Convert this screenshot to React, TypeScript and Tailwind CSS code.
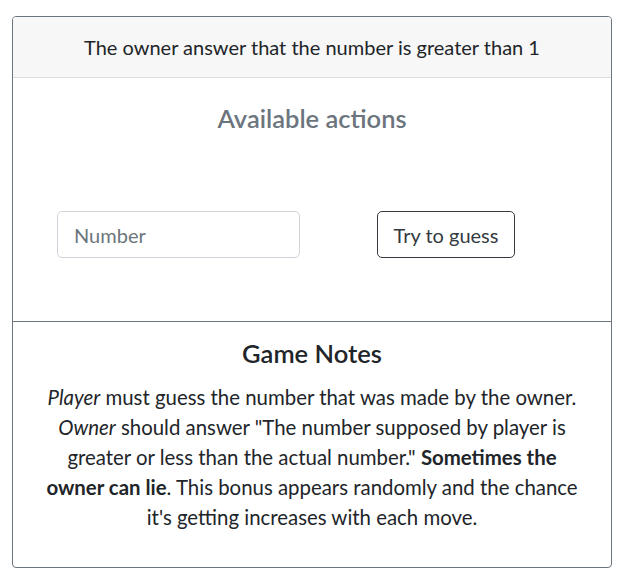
export default function App() {
  return (
    <div className="pt-4 pl-3 bg-white min-h-[586px]" style={{ fontFamily: "Lato, 'Noto Sans', sans-serif" }}>
      <div className="w-[600px] border border-[#6c757d] rounded-[4px] overflow-hidden">
        <div className="h-[61px] bg-[#f7f7f7] border-b border-[#dcdcdc] flex items-center justify-center text-[20px] text-[#212529]">
          The owner answer that the number is greater than 1
        </div>
        <div className="h-[244px] border-b border-[#6c757d] pt-[26px]">
          <h4 className="text-center text-[25.5px] leading-[29px] font-semibold text-[#6c757d]">Available actions</h4>
          <div className="mt-[78px] flex items-center pl-[44px]">
            <input
              className="w-[243px] h-[47px] border border-[#ced4da] rounded-[5px] px-4 text-[20px] text-[#495057] placeholder:text-[#6c757d] outline-none"
              placeholder="Number"
            />
            <button className="ml-[77px] w-[138px] h-[47px] border border-[#343a40] rounded-[5px] text-[20px] text-[#343a40] bg-white">
              Try to guess
            </button>
          </div>
        </div>
        <div className="pt-[17px] pb-[35px] text-center text-[#212529]">
          <h4 className="text-[25.5px] leading-[29px] font-semibold">Game Notes</h4>
          <p className="mt-[14px] text-[20.4px] leading-[30px]">
            <em>Player</em> must guess the number that was made by the owner.
            <br />
            <em>Owner</em> should answer "The number supposed by player is
            <br />
            greater or less than the actual number." <b>Sometimes the</b>
            <br />
            <b>owner can lie</b>. This bonus appears randomly and the chance
            <br />
            it's getting increases with each move.
          </p>
        </div>
      </div>
    </div>
  );
}
